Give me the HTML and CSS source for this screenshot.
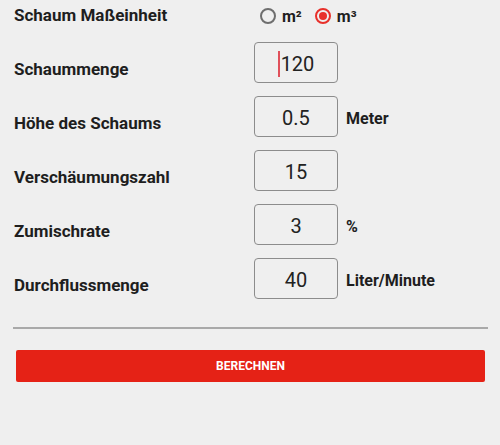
FILE: index.html
```html
<!DOCTYPE html>
<html lang="de">
<head>
<meta charset="utf-8">
<link rel="stylesheet" href="styles.css">
</head>
<body>
<div class="page">
  <div class="form">
    <div class="label first">Schaum Maßeinheit</div>
    <div class="radios">
      <span class="radio"><span class="ring"></span><span class="rtext">m²</span></span>
      <span class="radio checked"><span class="ring"><span class="dot"></span></span><span class="rtext">m³</span></span>
    </div>

    <div class="label">Schaummenge</div>
    <div class="field"><span class="cursor"></span>120</div>
    <div class="unit"></div>

    <div class="label">Höhe des Schaums</div>
    <div class="field">0.5</div>
    <div class="unit">Meter</div>

    <div class="label">Verschäumungszahl</div>
    <div class="field">15</div>
    <div class="unit"></div>

    <div class="label">Zumischrate</div>
    <div class="field">3</div>
    <div class="unit">%</div>

    <div class="label">Durchflussmenge</div>
    <div class="field">40</div>
    <div class="unit">Liter/Minute</div>
  </div>
  <div class="divider"></div>
  <div class="button">BERECHNEN</div>
</div>
</body>
</html>
```
FILE: styles.css
```css
html, body {
  margin: 0;
  padding: 0;
  background: #efefef;
  height: 100%;
}
body {
  font-family: Roboto, "Liberation Sans", sans-serif;
  color: #1e1e1e;
}
.page {
  padding: 0;
}
.form {
  display: grid;
  grid-template-columns: 254px 84px 1fr;
  grid-template-rows: 29px repeat(5, 41px);
  row-gap: 13px;
}
.label {
  padding-left: 14px;
  padding-top: 17px;
  font-size: 17px;
  line-height: 20px;
  font-weight: bold;
  color: #1e1e1e;
  white-space: nowrap;
}
.label.first {
  padding-top: 5px;
}
.radios {
  grid-column: 2 / 4;
  display: flex;
  align-items: center;
  height: 32px;
  padding-left: 6px;
  gap: 13px;
}
.radio {
  display: flex;
  align-items: center;
  gap: 6px;
}
.ring {
  width: 16px;
  height: 16px;
  box-sizing: border-box;
  border: 2px solid #6e6e6e;
  border-radius: 50%;
  display: flex;
  align-items: center;
  justify-content: center;
}
.radio.checked .ring {
  border-color: #e8302a;
}
.dot {
  width: 8px;
  height: 8px;
  border-radius: 50%;
  background: #e8302a;
}
.rtext {
  font-size: 16px;
  font-weight: bold;
  color: #1e1e1e;
}
.field {
  box-sizing: border-box;
  border: 1px solid #8c8c8c;
  border-radius: 4px;
  display: flex;
  align-items: center;
  justify-content: center;
  font-size: 20px;
  color: #222;
  padding-top: 2px;
  position: relative;
}
.cursor {
  display: inline-block;
  width: 2px;
  height: 26px;
  background: #e0505a;
  margin-right: 1px;
}
.unit {
  padding-left: 8px;
  padding-top: 13px;
  font-size: 16px;
  line-height: 20px;
  font-weight: bold;
  color: #1e1e1e;
  white-space: nowrap;
}
.divider {
  margin: 28px 12px 0 13px;
  height: 2px;
  background: #a9a9a9;
}
.button {
  margin: 21px 15px 0 16px;
  height: 32px;
  background: #e52216;
  border-radius: 2px;
  color: #fff;
  font-size: 12px;
  font-weight: bold;
  display: flex;
  align-items: center;
  justify-content: center;
}
```
